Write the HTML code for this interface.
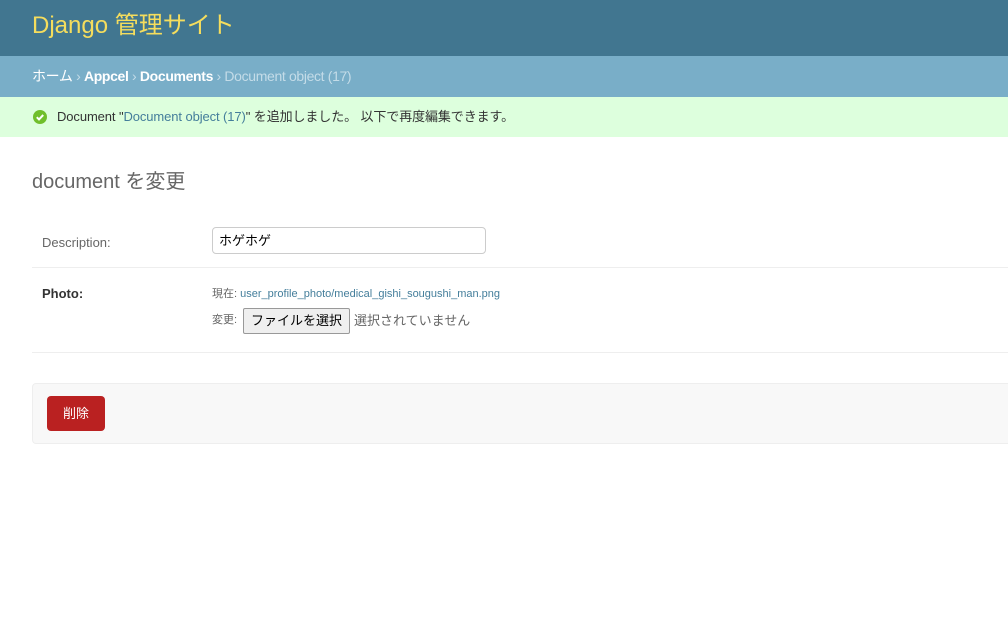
<!DOCTYPE html>
<html><head><meta charset="utf-8"><style>
*{box-sizing:border-box}
body{margin:0;width:1008px;height:637px;overflow:hidden;background:#fff;font-family:"Liberation Sans","Noto Sans CJK JP",sans-serif;color:#333;font-size:13px;position:relative}
.a{position:absolute;white-space:nowrap}
</style></head><body>
<div class="a" style="left:0;top:0;width:1008px;height:56px;background:#417690"></div>
<div class="a" style="left:32px;top:10px;font-size:24px;color:#f5dd5d;line-height:32px">Django 管理サイト</div>
<div class="a" style="left:0;top:56px;width:1008px;height:41px;background:#79aec8"></div>
<div class="a" style="left:32px;top:67px;font-size:14px;line-height:18px;color:#c4dce8;letter-spacing:-0.35px"><span style="color:#fff">ホーム</span> › <b style="color:#fff">Appcel</b> › <b style="color:#fff">Documents</b> › Document object (17)</div>
<div class="a" style="left:0;top:97px;width:1008px;height:40px;background:#dfd"></div>
<svg class="a" style="left:33px;top:110px" width="14" height="14" viewBox="0 0 14 14"><circle cx="7" cy="7" r="7" fill="#70bf2b"/><path d="M3.8 7.2l2.2 2.2 4.2-4.4" stroke="#fff" stroke-width="2" fill="none"/></svg>
<div class="a" style="left:57px;top:109px;line-height:16px;font-size:13px;color:#333;letter-spacing:-0.1px">Document "<span style="color:#447e9b">Document object (17)</span>" を追加しました。 以下で再度編集できます。</div>
<div class="a" style="left:32px;top:170px;font-size:20px;line-height:24px;color:#666">document を変更</div>
<div class="a" style="left:42px;top:235px;color:#666;line-height:16px">Description:</div>
<div class="a" style="left:212px;top:227px;width:274px;height:27px;border:1px solid #ccc;border-radius:4px;padding:4px 6px;font-size:13px;color:#000;line-height:17px">ホゲホゲ</div>
<div class="a" style="left:32px;top:267px;width:1000px;border-top:1px solid #eee"></div>
<div class="a" style="left:42px;top:286px;font-weight:bold;line-height:16px">Photo:</div>
<div class="a" style="left:212px;top:287px;font-size:11px;line-height:14px;color:#666">現在: <span style="color:#447e9b">user_profile_photo/medical_gishi_sougushi_man.png</span></div>
<div class="a" style="left:212px;top:313px;font-size:11px;line-height:14px;color:#666">変更:</div>
<div class="a" style="left:243px;top:308px;width:107px;height:26px;border:1px solid #999;border-radius:2px;background:#efefef;font-size:13px;color:#000;text-align:center;line-height:24px">ファイルを選択</div>
<div class="a" style="left:354px;top:313px;font-size:13px;color:#666;line-height:16px">選択されていません</div>
<div class="a" style="left:32px;top:352px;width:1000px;border-top:1px solid #eee"></div>
<div class="a" style="left:32px;top:383px;width:1000px;height:61px;background:#f8f8f8;border:1px solid #eee;border-radius:4px"></div>
<div class="a" style="left:47px;top:396px;width:58px;height:35px;background:#ba2121;border-radius:4px;color:#fff;text-align:center;line-height:35px;font-size:13px">削除</div>
</body></html>
